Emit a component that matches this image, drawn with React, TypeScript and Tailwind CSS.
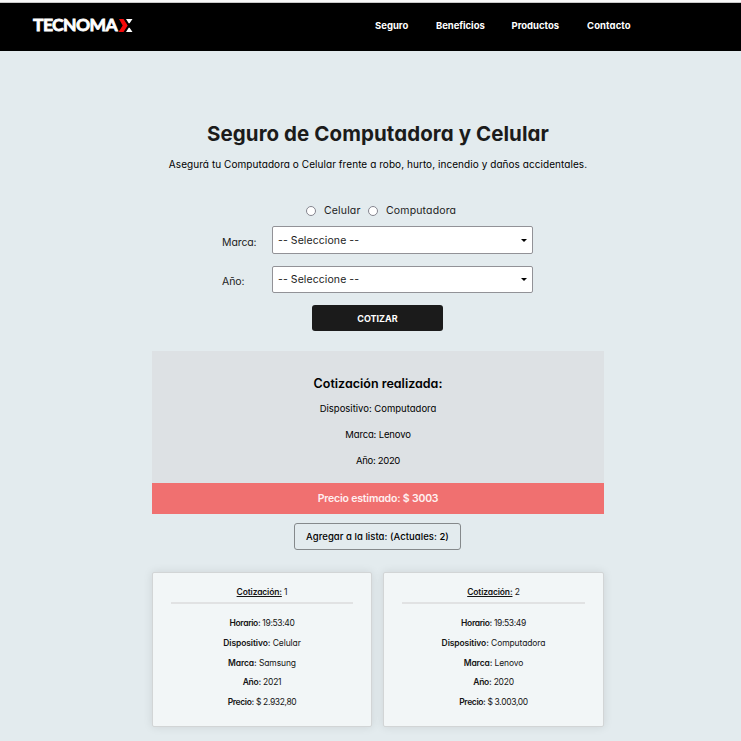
import { ReactNode } from "react";

function Logo() {
  return (
    <div className="flex h-[14px] w-[100px] items-center">
      <span className="w-[86px] pb-px font-['Lato',sans-serif] text-[17.5px] leading-[14px] font-bold tracking-[-0.6px] whitespace-nowrap text-white [-webkit-text-stroke:0.8px_white]">
        TECNOMA
      </span>
      <svg className="h-[13px] w-[14px] shrink-0" viewBox="0 0 14 13">
        <path d="M0 0h4.500l4.200 6.500-4.200 6.500H-.5l4.200-6.500z" fill="#f50a0a" />
        <path d="M7 0h6.500l-2.900 4.200H9.700zM7 13h6.500l-2.900-4.200H9.700z" fill="#fff" />
      </svg>
    </div>
  );
}

function SelectBox({ label, box, labelPad }: { label: string; box: string; labelPad: string }) {
  return (
    <div className="flex items-center">
      <span className={`w-[50px] text-[10.5px] leading-4 tracking-[-0.1px] text-[#222] ${labelPad}`}>{label}</span>
      <div className={`flex w-[261px] items-center justify-between rounded-[2px] border border-[#929297] bg-white pr-[5px] pl-[5px] ${box}`}>
        <span className="text-[10.5px] leading-4 tracking-[0.08px] text-[#1b1b1b]">-- Seleccione --</span>
        <span className="h-0 w-0 border-x-[3px] border-t-[3px] border-x-transparent border-t-black" />
      </div>
    </div>
  );
}

function Radio({ children }: { children: ReactNode }) {
  return (
    <label className="flex items-center gap-[8px]">
      <span className="h-[10px] w-[10px] rounded-full border border-[#85858f] bg-white" />
      <span>{children}</span>
    </label>
  );
}

type Quote = { id: number; time: string; device: string; brand: string; year: string; price: string };

const quotes: Quote[] = [
  { id: 1, time: "19:53:40", device: "Celular", brand: "Samsung", year: "2021", price: "$ 2.932,80" },
  { id: 2, time: "19:53:49", device: "Computadora", brand: "Lenovo", year: "2020", price: "$ 3.003,00" },
];

function Card({ q }: { q: Quote }) {
  const rows = [
    ["Horario:", q.time, "tracking-[-0.35px]"],
    ["Dispositivo:", q.device, "tracking-[-0.1px]"],
    ["Marca:", q.brand, "tracking-[-0.12px]"],
    ["Año:", q.year, "tracking-[-0.25px]"],
    ["Precio:", q.price, "tracking-[-0.36px]"],
  ];
  return (
    <article className="flex h-[155px] flex-col rounded-[2px] border border-[#d2d5d6] bg-[#f2f6f7] px-[18px] pt-[12px] text-center text-[8.5px] tracking-[-0.15px] text-[#151515] shadow-[0_0_10px_rgba(0,0,0,0.1)]">
      <h3 className="h-[19px] border-b-2 border-[#e1e2e3] leading-[14px]">
        <b className="font-semibold underline underline-offset-[1px]">Cotización:</b> {q.id}
      </h3>
      <div className="pt-[10.4px]">
        {rows.map(([k, v, spacing]) => (
          <p key={k} className={`h-[19.7px] leading-[19px] ${spacing}`}>
            <b className="font-semibold">{k}</b> {v}
          </p>
        ))}
      </div>
    </article>
  );
}

export default function App() {
  return (
    <div className="h-[741px] w-[741px] overflow-hidden bg-[#e3ebee] font-['Inter','Liberation_Sans',sans-serif] text-black [font-feature-settings:'cv11']">
      <div className="h-[3px] border-b border-[#c8c8c8] bg-[#f8f8f8]" />
      <header className="flex h-[48px] items-center bg-black pl-[33px]">
        <div className="pb-[3px]">
          <Logo />
        </div>
        <nav className="ml-[242px] flex gap-[27px] pb-[2px] text-[9.5px] font-bold text-white">
          <a className="w-[34px] whitespace-nowrap">Seguro</a>
          <a className="w-[48.5px] tracking-[-0.06px] whitespace-nowrap">Beneficios</a>
          <a className="w-[48.5px] whitespace-nowrap">Productos</a>
          <a className="w-[45px] tracking-[0.1px] whitespace-nowrap">Contacto</a>
        </nav>
      </header>
      <main className="ml-[152px] w-[452px] text-center">
        <h1 className="pt-[68px] text-[20.5px] leading-[30px] font-bold tracking-[0.07px] whitespace-nowrap text-[#1b1b1b]">Seguro de Computadora y Celular</h1>
        <p className="pt-[7px] pb-px text-[10px] leading-4 tracking-[0.06px] whitespace-nowrap">
          Asegurá tu Computadora o Celular frente a robo, hurto, incendio y daños accidentales.
        </p>
        <form className="pt-[30px] pl-[70px] text-left">
          <div className="ml-[84px] flex h-[16px] items-center gap-[7.5px] text-[10.5px] tracking-[0.15px] text-[#222]">
            <Radio>Celular</Radio>
            <Radio>Computadora</Radio>
          </div>
          <div className="flex flex-col gap-[12px] pt-[7px]">
            <SelectBox label="Marca:" box="h-[28px] pt-px" labelPad="pt-[6px]" />
            <SelectBox label="Año:" box="h-[27px]" labelPad="pt-[4px]" />
          </div>
          <button type="button" className="mt-[12px] ml-[90px] flex h-[26px] w-[131px] items-center justify-center rounded-[3px] bg-[#1b1b1b] pt-px text-[9px] font-bold text-white">
            COTIZAR
          </button>
        </form>
        <section className="mt-[20px] bg-[#dde1e4]">
          <div className="h-[132px] pt-[22px] text-[9.5px]">
            <h2 className="text-[12.5px] leading-[22px] font-semibold">Cotización realizada:</h2>
            <p className="mt-[5px] leading-[18px]">Dispositivo: Computadora</p>
            <p className="mt-[8px] leading-[18px] tracking-[-0.15px]">Marca: Lenovo</p>
            <p className="mt-[8px] leading-[18px] tracking-[-0.3px]">Año: 2020</p>
          </div>
          <p className="h-[31px] bg-[#f07070] text-[10.5px] leading-[31px] font-semibold tracking-[-0.18px] text-[#fff0f0]">Precio estimado: $ 3003</p>
        </section>
        <button type="button" className="mt-[9px] ml-[142px] flex h-[27px] w-[167px] items-center justify-center rounded-[3px] border border-[#85898b] pt-px text-[9.5px] font-medium tracking-[0.04px] whitespace-nowrap">
          Agregar a la lista: (Actuales: 2)
        </button>
        <div className="mt-[22px] grid grid-cols-[220px_221px] gap-[11px]">
          {quotes.map((q) => (
            <Card key={q.id} q={q} />
          ))}
        </div>
      </main>
    </div>
  );
}
